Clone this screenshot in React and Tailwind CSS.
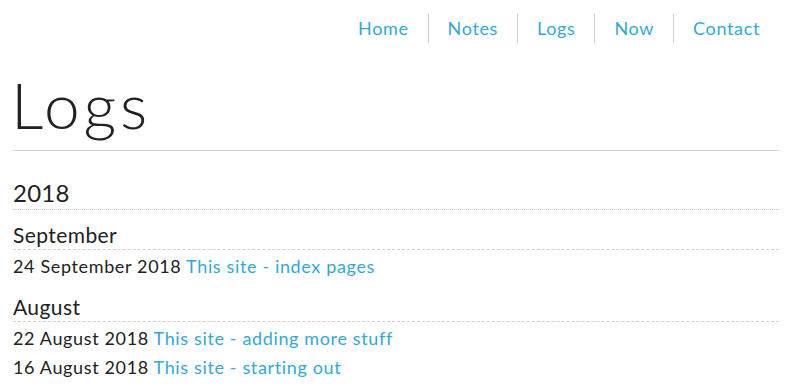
import React from "react";

const links = ["Home", "Notes", "Logs", "Now", "Contact"];

export default function App() {
  return (
    <div className="w-[790px] h-[386px] bg-white text-[#222] overflow-hidden tracking-[0.04em]" style={{ fontFamily: "Lato, 'Open Sans', sans-serif" }}>
      <div className="pl-[13px] pr-[11px]">
        <nav className="flex justify-end pt-[14px]">
          {links.map((l, i) => (
            <a
              key={l}
              className={"h-[29px] flex items-center px-[19px] text-[18px] text-[#31a9db] " + (i > 0 ? "border-l border-[#d0d0d0]" : "")}
            >
              {l}
            </a>
          ))}
        </nav>
        <h1 className="mt-[30px] text-[64px] leading-[64px] font-light tracking-[0.06em] pb-[13px] border-b border-[#d3d3d3]"><span className="-ml-[2px]">Logs</span></h1>
        <h2 className="mt-[28px] text-[24px] leading-[28px] tracking-[0.01em] pb-[2px] border-b border-dotted border-[#c8c8c8]">2018</h2>
        <h3 className="mt-[12px] text-[21px] leading-[26px] tracking-[0.02em] pb-[1px] border-b border-dashed border-[#d0d0d0]">September</h3>
        <div className="text-[18px] leading-[29px] pt-[2px]">
          24 September 2018 <a className="text-[#31a9db]">This site - index pages</a>
        </div>
        <h3 className="mt-[13px] text-[21px] leading-[26px] tracking-[0.02em] pb-[1px] border-b border-dashed border-[#d0d0d0]">August</h3>
        <div className="text-[18px] leading-[29px] pt-[2px]">
          22 August 2018 <a className="text-[#31a9db]">This site - adding more stuff</a>
        </div>
        <div className="text-[18px] leading-[29px]">
          16 August 2018 <a className="text-[#31a9db]">This site - starting out</a>
        </div>
      </div>
    </div>
  );
}
